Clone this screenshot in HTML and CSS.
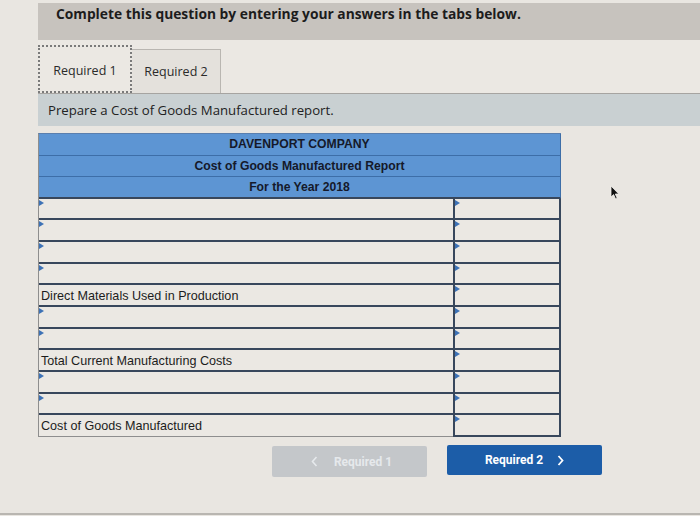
FILE: index.html
```html
<!DOCTYPE html>
<html>
<head>
<meta charset="utf-8">
<link rel="stylesheet" href="styles.css">
</head>
<body>
<div class="page">
  <div class="qhead">Complete this question by entering your answers in the tabs below.</div>
  <div class="tabs">
    <div class="tab active">Required 1</div>
    <div class="tab">Required 2</div>
  </div>
  <div class="prompt">Prepare a Cost of Goods Manufactured report.</div>

  <div class="report">
    <div class="hrow">DAVENPORT COMPANY</div>
    <div class="hrow">Cost of Goods Manufactured Report</div>
    <div class="hrow last">For the Year 2018</div>

    <div class="row"><div class="c1 in"></div><div class="c2"></div></div>
    <div class="row"><div class="c1 in"></div><div class="c2"></div></div>
    <div class="row"><div class="c1 in"></div><div class="c2"></div></div>
    <div class="row"><div class="c1 in"></div><div class="c2"></div></div>
    <div class="row"><div class="c1 lbl">Direct Materials Used in Production</div><div class="c2"></div></div>
    <div class="row"><div class="c1 in"></div><div class="c2"></div></div>
    <div class="row"><div class="c1 in"></div><div class="c2"></div></div>
    <div class="row"><div class="c1 lbl">Total Current Manufacturing Costs</div><div class="c2"></div></div>
    <div class="row"><div class="c1 in"></div><div class="c2"></div></div>
    <div class="row"><div class="c1 in"></div><div class="c2"></div></div>
    <div class="row end"><div class="c1 lbl">Cost of Goods Manufactured</div><div class="c2"></div></div>
  </div>

  <div class="nav">
    <div class="btn disabled">
      <svg class="chev" width="7" height="11" viewBox="0 0 7 11"><path d="M5.5 1 L1.5 5.5 L5.5 10" fill="none" stroke="currentColor" stroke-width="1.6"/></svg>
      <span>Required 1</span>
    </div>
    <div class="btn primary">
      <span>Required 2</span>
      <svg class="chev" width="7" height="11" viewBox="0 0 7 11"><path d="M1.5 1 L5.5 5.5 L1.5 10" fill="none" stroke="currentColor" stroke-width="1.8"/></svg>
    </div>
  </div>
</div>
<svg class="cursor" width="10" height="15" viewBox="0 0 10 15"><path d="M1 1 L1 12 L3.6 9.6 L5.6 14 L7.2 13.3 L5.3 9 L8.8 9 Z" fill="#111" stroke="#f2f0ec" stroke-width="0.8"/></svg>
</body>
</html>
```

FILE: styles.css
```css
html, body {
  margin: 0;
  padding: 0;
}
body {
  width: 700px;
  height: 516px;
  overflow: hidden;
  background: #e9e6e1;
  position: relative;
  font-family: "Open Sans", "Liberation Sans", sans-serif;
}
.page {
  padding: 3px 0 0 38px;
  border-bottom: 2px solid #b9b6b1;
  height: 515px;
  box-sizing: border-box;
}
.qhead {
  height: 37px;
  background: #c7c3be;
  padding: 1px 0 0 18px;
  box-sizing: border-box;
  font-weight: 700;
  font-size: 13.8px;
  line-height: 19px;
  color: #1c1c1c;
}
.tabs {
  height: 53px;
  display: flex;
  align-items: flex-end;
  border-bottom: 1px solid #a6a4a1;
  background: #ebe8e3;
}
.tab {
  box-sizing: border-box;
  font-size: 12.5px;
  color: #2a2a2a;
  display: flex;
  align-items: center;
  justify-content: center;
}
.tab.active {
  width: 94px;
  height: 48px;
  border: 2px dotted #7a7a7a;
  background: #ebe8e3;
  padding-top: 2px;
}
.tab:not(.active) {
  width: 89px;
  height: 44px;
  border: 1px solid #b9b6b1;
  border-left: none;
  border-bottom: none;
  background: #e4e1dc;
}
.prompt {
  height: 32px;
  background: #c9d0d2;
  padding-left: 10px;
  font-size: 13.2px;
  line-height: 32px;
  color: #222;
}
.report {
  margin-top: 7px;
  width: 523px;
  box-sizing: border-box;
  border-left: 1px solid #8e8e8e;
  border-top: 1px solid #5a7fae;
  font-family: "Liberation Sans", Arial, sans-serif;
  font-size: 12px;
  color: #1c1c1c;
}
.hrow {
  height: 21.5px;
  box-sizing: border-box;
  background: #5d95d3;
  border-bottom: 1px solid #3d6ea8;
  border-right: 1px solid #3d6ea8;
  text-align: center;
  font-weight: 700;
  font-size: 12.2px;
  line-height: 20px;
  color: #15192a;
}
.hrow.last {
  border-bottom: 2px solid #38475c;
}
.row {
  display: grid;
  grid-template-columns: 414px 108px;
  grid-template-rows: 21.7px;
  height: 21.7px;
}
.c1, .c2 {
  position: relative;
  box-sizing: border-box;
  background: #ebe8e3;
  overflow: hidden;
}
.c1 {
  border-bottom: 2px solid #38475c;
}
.row.end .c1 {
  border-bottom: 1px solid #8e8e8e;
}
.c2 {
  border-left: 2px solid #38475c;
  border-right: 2px solid #38475c;
  border-bottom: 2px solid #38475c;
}
.lbl {
  padding: 2px 0 0 2px;
  font-size: 12.6px;
  line-height: 19px;
  white-space: nowrap;
}
.in::before, .c2::before {
  content: "";
  position: absolute;
  left: 0;
  top: 1px;
  border-left: 5px solid #3d72b6;
  border-top: 3px solid transparent;
  border-bottom: 3px solid transparent;
}
.nav {
  display: flex;
  gap: 20px;
  padding-left: 234px;
  margin-top: 9px;
}
.btn {
  width: 155px;
  height: 31px;
  border-radius: 2px;
  display: flex;
  align-items: center;
  justify-content: center;
  font-family: Roboto, "Liberation Sans", sans-serif;
  font-weight: 700;
  font-size: 12px;
}
.btn.disabled {
  background: #c4c7ca;
  color: #e6e9ec;
  gap: 16px;
  padding-left: 4px;
  box-sizing: border-box;
}
.btn.primary {
  background: #1c5da8;
  color: #ffffff;
  gap: 14px;
  height: 30px;
  margin-top: -1px;
}
.chev {
  display: block;
}
.cursor {
  position: absolute;
  left: 610px;
  top: 185px;
}
```
